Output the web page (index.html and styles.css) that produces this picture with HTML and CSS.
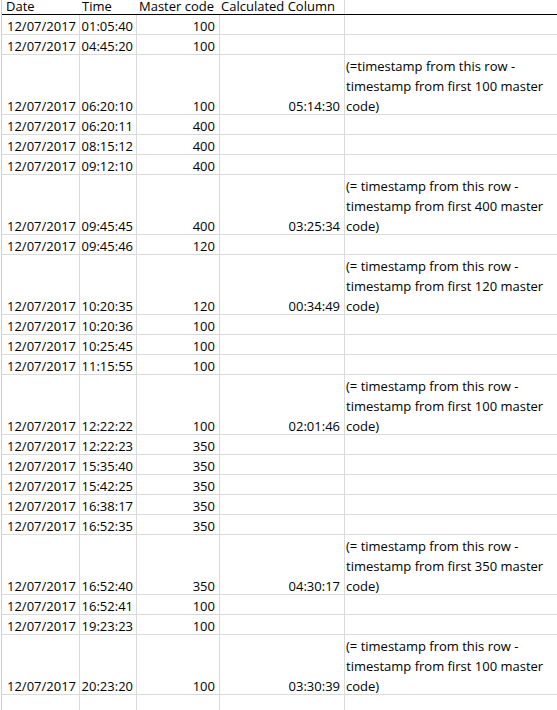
FILE: index.html
```html
<!DOCTYPE html>
<html>
<head>
<meta charset="utf-8">
<link rel="stylesheet" href="styles.css">
</head>
<body>
<div class="sheet">
  <div class="row head">
    <div class="cell a hl pad-date"><span>Date</span></div>
    <div class="cell b hl"><span>Time</span></div>
    <div class="cell c hl"><span>Master code</span></div>
    <div class="cell d hl keep"><span>Calculated Column</span></div>
    <div class="cell e"></div>
  </div>

  <div class="row"><div class="cell a"><span>12/07/2017</span></div><div class="cell b"><span>01:05:40</span></div><div class="cell c"><span>100</span></div><div class="cell d"></div><div class="cell e"></div></div>
  <div class="row"><div class="cell a"><span>12/07/2017</span></div><div class="cell b"><span>04:45:20</span></div><div class="cell c"><span>100</span></div><div class="cell d"></div><div class="cell e"></div></div>
  <div class="row tall"><div class="cell a"><span>12/07/2017</span></div><div class="cell b"><span>06:20:10</span></div><div class="cell c"><span>100</span></div><div class="cell d"><span>05:14:30</span></div><div class="cell e"><span>(=timestamp from this row -<br>timestamp from first 100 master<br>code)</span></div></div>
  <div class="row"><div class="cell a"><span>12/07/2017</span></div><div class="cell b"><span>06:20:11</span></div><div class="cell c"><span>400</span></div><div class="cell d"></div><div class="cell e"></div></div>
  <div class="row"><div class="cell a"><span>12/07/2017</span></div><div class="cell b"><span>08:15:12</span></div><div class="cell c"><span>400</span></div><div class="cell d"></div><div class="cell e"></div></div>
  <div class="row"><div class="cell a"><span>12/07/2017</span></div><div class="cell b"><span>09:12:10</span></div><div class="cell c"><span>400</span></div><div class="cell d"></div><div class="cell e"></div></div>
  <div class="row tall"><div class="cell a"><span>12/07/2017</span></div><div class="cell b"><span>09:45:45</span></div><div class="cell c"><span>400</span></div><div class="cell d"><span>03:25:34</span></div><div class="cell e"><span>(= timestamp from this row -<br>timestamp from first 400 master<br>code)</span></div></div>
  <div class="row"><div class="cell a"><span>12/07/2017</span></div><div class="cell b"><span>09:45:46</span></div><div class="cell c"><span>120</span></div><div class="cell d"></div><div class="cell e"></div></div>
  <div class="row tall"><div class="cell a"><span>12/07/2017</span></div><div class="cell b"><span>10:20:35</span></div><div class="cell c"><span>120</span></div><div class="cell d"><span>00:34:49</span></div><div class="cell e"><span>(= timestamp from this row -<br>timestamp from first 120 master<br>code)</span></div></div>
  <div class="row"><div class="cell a"><span>12/07/2017</span></div><div class="cell b"><span>10:20:36</span></div><div class="cell c"><span>100</span></div><div class="cell d"></div><div class="cell e"></div></div>
  <div class="row"><div class="cell a"><span>12/07/2017</span></div><div class="cell b"><span>10:25:45</span></div><div class="cell c"><span>100</span></div><div class="cell d"></div><div class="cell e"></div></div>
  <div class="row"><div class="cell a"><span>12/07/2017</span></div><div class="cell b"><span>11:15:55</span></div><div class="cell c"><span>100</span></div><div class="cell d"></div><div class="cell e"></div></div>
  <div class="row tall"><div class="cell a"><span>12/07/2017</span></div><div class="cell b"><span>12:22:22</span></div><div class="cell c"><span>100</span></div><div class="cell d"><span>02:01:46</span></div><div class="cell e"><span>(= timestamp from this row -<br>timestamp from first 100 master<br>code)</span></div></div>
  <div class="row"><div class="cell a"><span>12/07/2017</span></div><div class="cell b"><span>12:22:23</span></div><div class="cell c"><span>350</span></div><div class="cell d"></div><div class="cell e"></div></div>
  <div class="row"><div class="cell a"><span>12/07/2017</span></div><div class="cell b"><span>15:35:40</span></div><div class="cell c"><span>350</span></div><div class="cell d"></div><div class="cell e"></div></div>
  <div class="row"><div class="cell a"><span>12/07/2017</span></div><div class="cell b"><span>15:42:25</span></div><div class="cell c"><span>350</span></div><div class="cell d"></div><div class="cell e"></div></div>
  <div class="row"><div class="cell a"><span>12/07/2017</span></div><div class="cell b"><span>16:38:17</span></div><div class="cell c"><span>350</span></div><div class="cell d"></div><div class="cell e"></div></div>
  <div class="row"><div class="cell a"><span>12/07/2017</span></div><div class="cell b"><span>16:52:35</span></div><div class="cell c"><span>350</span></div><div class="cell d"></div><div class="cell e"></div></div>
  <div class="row tall"><div class="cell a"><span>12/07/2017</span></div><div class="cell b"><span>16:52:40</span></div><div class="cell c"><span>350</span></div><div class="cell d"><span>04:30:17</span></div><div class="cell e"><span>(= timestamp from this row -<br>timestamp from first 350 master<br>code)</span></div></div>
  <div class="row"><div class="cell a"><span>12/07/2017</span></div><div class="cell b"><span>16:52:41</span></div><div class="cell c"><span>100</span></div><div class="cell d"></div><div class="cell e"></div></div>
  <div class="row"><div class="cell a"><span>12/07/2017</span></div><div class="cell b"><span>19:23:23</span></div><div class="cell c"><span>100</span></div><div class="cell d"></div><div class="cell e"></div></div>
  <div class="row tall"><div class="cell a"><span>12/07/2017</span></div><div class="cell b"><span>20:23:20</span></div><div class="cell c"><span>100</span></div><div class="cell d"><span>03:30:39</span></div><div class="cell e"><span>(= timestamp from this row -<br>timestamp from first 100 master<br>code)</span></div></div>
  <div class="row"><div class="cell a"></div><div class="cell b"></div><div class="cell c"></div><div class="cell d"></div><div class="cell e"></div></div>
</div>
</body>
</html>
```

FILE: styles.css
```css
html, body {
  margin: 0;
  padding: 0;
  background: #ffffff;
  overflow: hidden;
}

.sheet {
  margin-left: 1px;
  border-left: 1px solid #cfcfcf;
  width: 560px;
  font-family: "Open Sans", "Noto Sans", sans-serif;
  font-size: 13px;
  color: #000000;
}

.row {
  display: flex;
  height: 20px;
  box-sizing: border-box;
  border-bottom: 1px solid #dadada;
}

.row.tall {
  height: 60px;
}

.row.head {
  height: 15px;
  border-bottom: 1px solid #000000;
}

.cell {
  box-sizing: border-box;
  border-right: 1px solid #dadada;
  display: flex;
  align-items: flex-end;
  justify-content: flex-end;
  padding-right: 3px;
  white-space: nowrap;
  line-height: 20px;
}

.cell span {
  margin-bottom: -2px;
}

.row.head .cell {
  line-height: 14px;
}

.row.head .cell span {
  margin-bottom: 1px;
}

.a { width: 78px; }
.b { width: 57px; }
.c { width: 83px; padding-right: 4px; }
.d { width: 125px; padding-right: 4px; }
.e {
  flex: 1;
  border-right: none;
  justify-content: flex-start;
  padding-left: 1px;
}

.hl {
  justify-content: flex-start;
  padding-left: 2px;
  border-right-color: transparent;
}

.hl.keep {
  border-right-color: #dadada;
  padding-left: 1px;
}

.pad-date {
  padding-left: 4px;
}
```
